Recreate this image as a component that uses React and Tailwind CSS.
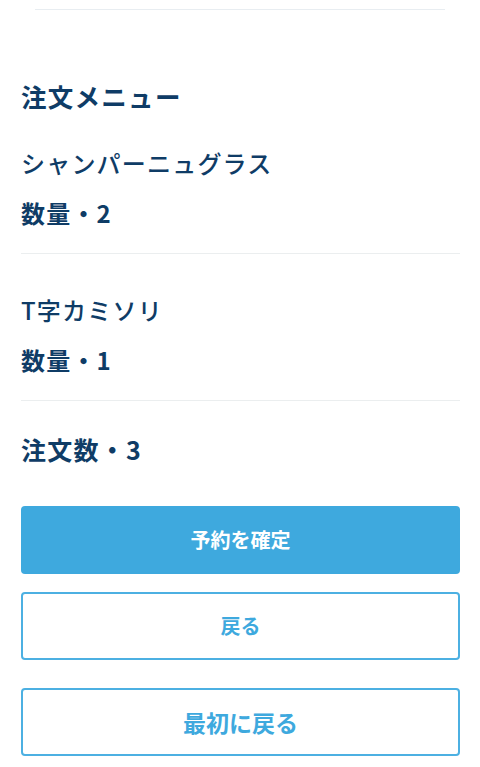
import React from 'react';

const items = [
  { name: 'シャンパーニュグラス', qty: 2 },
  { name: 'T字カミソリ', qty: 1 },
];

const App = () => {
  return (
    <div
      className="w-[480px] bg-white text-[#0f3c66]"
      style={{ fontFamily: '"Noto Sans CJK JP", "Noto Sans", sans-serif' }}
    >
      <div className="pt-[9px] px-[35px]">
        <div className="h-px bg-[#e8edf1]" />
      </div>

      <div className="pl-[21px] pr-[20px]">
        <h2 className="mt-[68px] text-[25.5px] leading-[36px] font-bold tracking-[0.05em]">注文メニュー</h2>

        {items.map((item, i) => (
          <div
            key={i}
            className={`border-b border-[#ebeeef] pb-[22px] ${i === 0 ? 'pt-[31px]' : 'pt-[38px]'}`}
          >
            <p className="text-[24px] leading-[36px] font-medium tracking-[0.05em]">{item.name}</p>
            <p className="mt-[14px] text-[24px] leading-[36px] font-bold tracking-[0.05em]">数量・{item.qty}</p>
          </div>
        ))}

        <p className="mt-[30px] text-[25px] leading-[36px] font-bold tracking-[0.05em]">注文数・3</p>

        <div className="mt-[39px] flex flex-col">
          <button className="h-[68px] rounded-[4px] bg-[#3ea9de] text-white text-[20px] font-bold">
            予約を確定
          </button>
          <button className="mt-[18px] h-[68px] rounded-[4px] border-2 border-[#4cb0e2] bg-white text-[#3ea9de] text-[20px] font-bold">
            戻る
          </button>
          <button className="mt-[28px] h-[68px] rounded-[4px] border-2 border-[#4cb0e2] bg-white text-[#3ea9de] text-[23px] font-bold">
            最初に戻る
          </button>
        </div>
      </div>
    </div>
  );
};

export default App;
